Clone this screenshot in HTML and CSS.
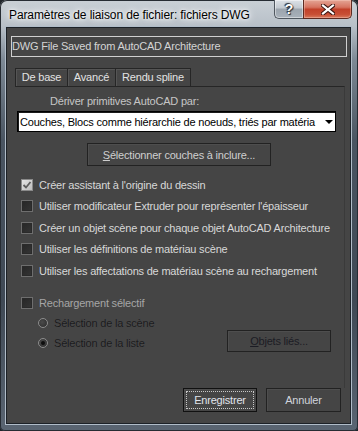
FILE: index.html
```html
<!DOCTYPE html>
<html lang="fr">
<head>
    <meta charset="UTF-8">
    <title>Paramètres de liaison de fichier</title>
    <link rel="stylesheet" href="styles.css">
</head>
<body>
    <div class="window">
        <div class="titlebar">
            <span class="title">Paramètres de liaison de fichier: fichiers DWG</span>
            <div class="caps">
                <div class="cap help">?</div>
                <div class="cap close">
                    <svg width="14" height="11" viewBox="0 0 14 11">
                        <path d="M2 1.5 L12 9.5 M12 1.5 L2 9.5" stroke="#3a1510" stroke-width="4.2" stroke-linecap="square"/>
                        <path d="M2 1.5 L12 9.5 M12 1.5 L2 9.5" stroke="#fff" stroke-width="2.2" stroke-linecap="square"/>
                    </svg>
                </div>
            </div>
        </div>

        <div class="client">
            <div class="filename">DWG File Saved from AutoCAD Architecture</div>

            <div class="tabs">
                <div class="tab tab-base">De base</div>
                <div class="tab tab-adv">Avancé</div>
                <div class="tab tab-spline">Rendu spline</div>
            </div>

            <div class="panel">
                <div class="derive-label">Dériver primitives AutoCAD par:</div>
                <div class="combo">
                    <span class="combo-text">Couches, Blocs comme hiérarchie de noeuds, triés par matéria</span>
                    <span class="combo-arrow"></span>
                </div>

                <button class="btn select-btn"><u>S</u>électionner couches à inclure...</button>

                <ul class="options">
                    <li><span class="check checked">
                        <svg width="10" height="10" viewBox="0 0 10 10"><path d="M1.5 5 L4 7.5 L8.5 2" fill="none" stroke="#5e5e5e" stroke-width="1.8"/></svg>
                    </span>Créer assistant à l'origine du dessin</li>
                    <li><span class="check"></span>Utiliser modificateur Extruder pour représenter l'épaisseur</li>
                    <li><span class="check"></span>Créer un objet scène pour chaque objet AutoCAD Architecture</li>
                    <li><span class="check"></span>Utiliser les définitions de matériau scène</li>
                    <li><span class="check"></span>Utiliser les affectations de matériau scène au rechargement</li>
                </ul>

                <div class="reload"><span class="check"></span>Rechargement sélectif</div>

                <div class="reload-opts">
                    <div class="radios">
                        <div class="radio-row"><span class="radio"></span>Sélection de la scène</div>
                        <div class="radio-row"><span class="radio on"></span>Sélection de la liste</div>
                    </div>
                    <button class="btn linked-btn"><u>O</u>bjets liés...</button>
                </div>
            </div>

            <div class="footer">
                <button class="btn dlg-btn save">Enregistrer</button>
                <button class="btn dlg-btn cancel">Annuler</button>
            </div>
        </div>
    </div>
</body>
</html>
```

FILE: styles.css
```css
* {
    box-sizing: border-box;
}

body {
    margin: 0;
    background-color: #1f252b;
    font-family: "Liberation Sans", Arial, sans-serif;
    font-size: 11px;
    letter-spacing: -0.2px;
}

.window {
    width: 358px;
    height: 431px;
    display: flex;
    flex-direction: column;
    border-radius: 7px 7px 5px 5px;
    overflow: hidden;
    background: linear-gradient(to bottom, #c9d0d6 0, #b8c0c8 26px, #7d8995 60px, #4a5562 140px, #3f4955 300px, #5a6572 431px);
    box-shadow: inset 0 0 0 1px #262c33;
}

/* title bar */

.titlebar {
    height: 28px;
    display: flex;
    align-items: flex-start;
    flex-shrink: 0;
}

.title {
    margin: 8px 0 0 9px;
    line-height: 14px;
    font-size: 12px;
    letter-spacing: -0.1px;
    color: #000;
    text-shadow: 0 0 6px #fff, 0 0 10px #f2f4f6, 0 0 3px #fff;
}

.caps {
    display: flex;
    margin-left: auto;
    margin-right: 6px;
}

.cap {
    height: 19px;
    display: flex;
    align-items: center;
    justify-content: center;
}

.help {
    width: 29px;
    border: 1px solid #4f575f;
    border-top: none;
    border-right: none;
    border-radius: 0 0 0 5px;
    background: linear-gradient(to bottom, #dde2e7 0, #c2c9d0 45%, #9ca5ae 50%, #a8b1ba 100%);
    box-shadow: inset 0 0 0 1px rgba(255, 255, 255, 0.45);
    color: #fff;
    font-weight: bold;
    font-size: 14px;
    text-shadow: 0 0 1px #2a3038, 1px 1px 1px #2a3038, -1px -1px 1px #2a3038;
}

.close {
    width: 49px;
    border: 1px solid #5e2b22;
    border-top: none;
    border-radius: 0 0 5px 0;
    background: linear-gradient(to bottom, #e4a595 0, #d67461 40%, #c2412a 52%, #c84f35 80%, #d87a5e 100%);
    box-shadow: inset 0 0 0 1px rgba(255, 220, 210, 0.35);
}

/* client area */

.client {
    flex: 1;
    margin: 0 8px 8px 7px;
    padding: 8px 3px 0 4px;
    display: flex;
    flex-direction: column;
    background-color: #454545;
    box-shadow: 0 0 0 1px #1c2127, 0 0 0 2px #b0bcc8;
    color: #d8d8d8;
}

.filename {
    height: 21px;
    line-height: 19px;
    border: 1px solid #cfcfcf;
    color: #d4d4d4;
    white-space: nowrap;
}

.tabs {
    display: flex;
    height: 18px;
    margin: 11px 0 0 4px;
}

.tab {
    height: 18px;
    line-height: 17px;
    text-align: center;
    border: 1px solid #262626;
    border-bottom: none;
    color: #e2e2e2;
    box-shadow: inset 1px 1px 0 #555;
}

.tab + .tab {
    margin-left: -1px;
}

.tab-base {
    width: 53px;
}

.tab-adv {
    width: 49px;
}

.tab-spline {
    width: 76px;
}

.panel {
    flex: 1;
    margin: 0 2px 0 4px;
    border-top: 1px solid #262626;
    border-right: 1px solid #3a3a3a;
    display: flex;
    flex-direction: column;
}

.derive-label {
    margin: 7px 0 0 35px;
    line-height: 14px;
    color: #c6c6c6;
}

.combo {
    height: 21px;
    margin: 3px 8px 0 2px;
    padding-left: 2px;
    display: flex;
    align-items: center;
    background-color: #fff;
    border: 1px solid #000;
    box-shadow: inset 1px 1px 0 #1a1a1a;
    color: #000;
}

.combo-text {
    flex: 1;
    overflow: hidden;
    white-space: nowrap;
}

.combo-arrow {
    width: 0;
    height: 0;
    margin: 1px 2px 0 8px;
    border-left: 4px solid transparent;
    border-right: 4px solid transparent;
    border-top: 4px solid #000;
}

.btn {
    font-family: inherit;
    font-size: 11px;
    letter-spacing: -0.2px;
    background-color: #454545;
    border: 1px solid #222;
    box-shadow: inset 1px 1px 0 #4e4e4e;
    color: #cfcfcf;
    padding: 0;
}

.btn u {
    text-decoration: underline;
}

.select-btn {
    width: 184px;
    height: 23px;
    margin: 11px 0 0 72px;
}

.options {
    list-style: none;
    margin: 8px 0 0 0;
    padding: 0;
}

.options li, .reload {
    height: 21.5px;
    display: flex;
    align-items: center;
    padding-left: 6px;
    white-space: nowrap;
}

.check {
    width: 12px;
    height: 12px;
    margin-right: 6px;
    flex-shrink: 0;
    border: 1px solid #6e6e6e;
    background: linear-gradient(135deg, #262626, #353535);
    box-shadow: inset 0 0 0 1px #2a2a2a;
    display: flex;
    align-items: center;
    justify-content: center;
}

.check.checked {
    border-color: #8a8a8a;
    background: linear-gradient(135deg, #e4e4e4, #bdbdbd);
    box-shadow: none;
}

.reload {
    height: 21px;
    margin-top: 11px;
    color: #a6a6a6;
}

.reload-opts {
    display: flex;
    align-items: flex-end;
}

.radios {
    padding-left: 23px;
}

.radio-row {
    height: 19.5px;
    display: flex;
    align-items: center;
    color: #1a1a1c;
    text-shadow: 0 0 1px rgba(120, 120, 120, 0.3);
    white-space: nowrap;
}

.radio {
    width: 10px;
    height: 10px;
    margin-right: 6px;
    border-radius: 50%;
    border: 1px solid #8c8c8c;
    background: radial-gradient(circle at 40% 40%, #4a4a4a, #2b2b2b);
    display: flex;
    align-items: center;
    justify-content: center;
}

.radio.on::before {
    content: "";
    width: 4px;
    height: 4px;
    border-radius: 50%;
    background-color: #0e0e0e;
}

.linked-btn {
    width: 104px;
    height: 22px;
    margin: 0 13px 0.5px auto;
    color: #1c1c24;
}

.footer {
    display: flex;
    justify-content: flex-end;
    gap: 9px;
    padding-right: 6px;
    margin-bottom: 11px;
}

.dlg-btn {
    height: 24px;
}

.save {
    width: 74px;
    border-color: #111;
    color: #e0e4ec;
    outline: 1px dotted #c8c8c8;
    outline-offset: -4px;
}

.cancel {
    width: 75px;
    color: #d0d4dc;
}
```
